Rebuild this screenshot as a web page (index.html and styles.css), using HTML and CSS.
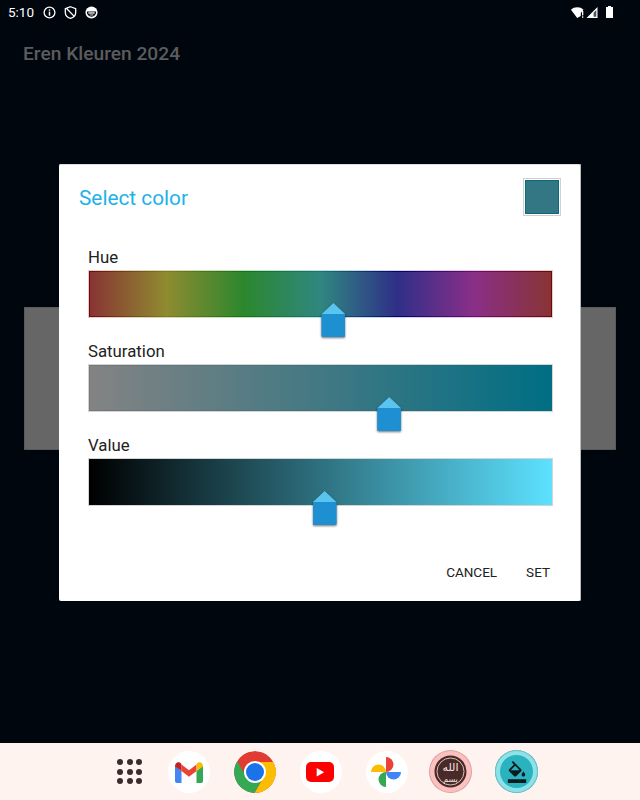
FILE: index.html
```html
<!DOCTYPE html>
<html lang="nl">

<head>
    <meta charset="UTF-8">
    <meta name="viewport" content="width=device-width, initial-scale=1">
    <title>Eren Kleuren 2024</title>
    <link rel="stylesheet" href="styles.css">
</head>

<body>
    <div class="screen">

        <div class="status-bar">
            <div class="status-left">
                <span class="clock">5:10</span>
                <svg class="status-icon" viewBox="0 0 14 14">
                    <circle cx="7" cy="7" r="5.8" fill="none" stroke="#fff" stroke-width="1.4" />
                    <rect x="6.2" y="6" width="1.6" height="4.4" fill="#fff" />
                    <rect x="6.2" y="3.6" width="1.6" height="1.5" fill="#fff" />
                </svg>
                <svg class="status-icon" viewBox="0 0 14 14">
                    <path d="M7 0.8 L12.6 2.8 V6.6 C12.6 9.8 10.400 12.300 7 13.300 C3.600 12.300 1.400 9.800 1.400 6.600 V2.800 Z" fill="none" stroke="#fff" stroke-width="1.4" />
                    <path d="M2.600 2.400 L11 11.200" stroke="#fff" stroke-width="1.4" />
                </svg>
                <svg class="status-icon" viewBox="0 0 14 14">
                    <circle cx="7" cy="7" r="6.500" fill="#fff" />
                    <path d="M2 6 H12 C12 9.500 10 11.500 7 11.500 C4 11.500 2 9.500 2 6 Z" fill="#00060e" />
                    <rect x="3.600" y="6.800" width="6.800" height="1.400" fill="#fff" />
                    <rect x="5" y="9.200" width="4" height="0.900" fill="#fff" />
                </svg>
            </div>
            <div class="status-right">
                <svg class="wifi" viewBox="0 0 14 11">
                    <path d="M0 2.800 C3 -0.500 9.500 -0.500 12.500 2.800 L9.800 6 V9 L6.200 11 Z" fill="#fff" />
                    <rect x="11" y="4" width="1.300" height="4.400" fill="#fff" />
                    <rect x="11" y="9.300" width="1.300" height="1.500" fill="#fff" />
                </svg>
                <svg class="signal" viewBox="0 0 12 11">
                    <path d="M0.500 11 L11.500 0 V11 Z" fill="#fff" />
                    <path d="M7.600 9.800 H10.300 V3 L7.600 5.700 Z" fill="#555" />
                </svg>
                <svg class="battery" viewBox="0 0 7 12">
                    <path d="M2 0 H5 V1 H7 V12 H0 V1 H2 Z" fill="#fff" />
                </svg>
            </div>
        </div>

        <div class="app">
            <h1 class="app-title">Eren Kleuren 2024</h1>
            <div class="backdrop-block"></div>

            <div class="dialog">
                <div class="dialog-head">
                    <h2>Select color</h2>
                    <div class="swatch"></div>
                </div>

                <div class="slider">
                    <div class="slider-label">Hue</div>
                    <div class="track track-hue">
                        <div class="thumb" style="left: 52.8%"></div>
                    </div>
                </div>
                <div class="slider">
                    <div class="slider-label">Saturation</div>
                    <div class="track track-sat">
                        <div class="thumb" style="left: 64.9%"></div>
                    </div>
                </div>
                <div class="slider">
                    <div class="slider-label">Value</div>
                    <div class="track track-val">
                        <div class="thumb" style="left: 50.9%"></div>
                    </div>
                </div>

                <div class="dialog-actions">
                    <span>CANCEL</span>
                    <span>SET</span>
                </div>
            </div>
        </div>

        <div class="dock">
            <div class="all-apps">
                <i></i><i></i><i></i><i></i><i></i><i></i><i></i><i></i><i></i>
            </div>

            <!-- gmail -->
            <div class="dock-icon">
                <svg viewBox="0 0 42 42" width="42" height="42">
                    <path d="M7 15 V30 a2 2 0 0 0 2 2 H13.500 V20 Z" fill="#4285f4" />
                    <path d="M28.500 20 V32 H33 A2 2 0 0 0 35 30 V15 Z" fill="#34a853" />
                    <path d="M13.500 20 L21 25.800 L28.500 20 V13.500 L21 19.200 L13.500 13.500 Z" fill="#ea4335" />
                    <path d="M7 15 C7 11.500 11 10.200 13 12.400 L13.500 13.500 V20 L7 15.500 Z" fill="#c5221f" />
                    <path d="M35 15 C35 11.500 31 10.200 29 12.400 L28.500 13.500 V20 L35 15.500 Z" fill="#fbbc04" />
                </svg>
            </div>

            <!-- chrome -->
            <div class="dock-icon">
                <svg viewBox="0 0 42 42" width="42" height="42">
                    <circle cx="21" cy="21" r="21" fill="#e03c31" />
                    <path d="M21 11 H39.470 A21 21 0 0 1 20.420 42 L29.660 26 Z" fill="#fbbc04" />
                    <path d="M29.660 26 L20.420 42 A21 21 0 0 1 3.100 10 L12.340 26 Z" fill="#34a853" />
                    <circle cx="21" cy="21" r="11" fill="#fff" />
                    <circle cx="21" cy="21" r="9" fill="#1a73e8" />
                </svg>
            </div>

            <!-- youtube -->
            <div class="dock-icon">
                <svg viewBox="0 0 42 42" width="42" height="42">
                    <rect x="6" y="11" width="28" height="20" rx="5" fill="#f00" />
                    <path d="M16.700 17 L24.200 21.200 L16.700 25.400 Z" fill="#fff" />
                </svg>
            </div>

            <!-- photos -->
            <div class="dock-icon">
                <svg viewBox="0 0 42 42" width="42" height="42">
                    <path d="M20 21 V6 A7.500 7.500 0 0 1 20 21 Z" fill="#ea4335" />
                    <path d="M20 21 H35 A7.500 7.500 0 0 1 20 21 Z" fill="#4285f4" />
                    <path d="M20 21 V36 A7.500 7.500 0 0 1 20 21 Z" fill="#34a853" />
                    <path d="M20 21 H5 A7.500 7.500 0 0 1 20 21 Z" fill="#fbbc04" />
                </svg>
            </div>

            <div class="dock-adaptive">
                <div class="round-app app-bismillah">
                    <svg viewBox="0 0 43 43" width="43" height="43">
                        <circle cx="21.500" cy="21.500" r="16" fill="#4a2a28" />
                        <circle cx="21.500" cy="21.500" r="13.500" fill="none" stroke="#f3e6e0" stroke-width="0.800" />
                        <text x="21.500" y="21" class="callig-top">الله</text>
                        <text x="21.500" y="32" class="callig-bottom">بسم</text>
                    </svg>
                </div>
                <div class="round-app app-fill">
                    <svg viewBox="0 0 24 24" width="22" height="22">
                        <path d="M16.560 8.940L7.620 0 6.210 1.410l2.380 2.380-5.150 5.150c-.59.590-.59 1.540 0 2.120l5.500 5.500c.29.290.68.440 1.060.440s.77-.15 1.060-.44l5.500-5.500c.59-.58.59-1.530 0-2.120zM5.210 10L10 5.210 14.790 10H5.210zM19 11.500s-2 2.170-2 3.500c0 1.100.9 2 2 2s2-.9 2-2c0-1.330-2-3.500-2-3.500zM2 20h20v4H2v-4z" fill="#0c1a1e" />
                    </svg>
                </div>
            </div>
        </div>

    </div>
</body>

</html>
```

FILE: styles.css
```css
* {
    box-sizing: border-box;
}

body {
    margin: 0;
    font-family: Roboto, 'Liberation Sans', sans-serif;
    background: #00060e;
}

.screen {
    width: 640px;
    height: 800px;
    display: flex;
    flex-direction: column;
    overflow: hidden;
    background: #00060e;
}

/* status bar */
.status-bar {
    height: 24px;
    padding: 0 27px 0 8px;
    display: flex;
    justify-content: space-between;
    align-items: center;
    color: white;
}

.status-left {
    display: flex;
    align-items: center;
    gap: 8px;
}

.clock {
    width: 27px;
    font-size: 13.500px;
}

.status-icon {
    width: 13px;
    height: 13px;
}

.status-right {
    display: flex;
    align-items: center;
    gap: 1px;
}

.wifi {
    width: 14px;
    height: 11px;
}

.signal {
    width: 12px;
    height: 11px;
}

.battery {
    width: 7px;
    height: 12px;
    margin-left: 7px;
}

/* app behind the dialog */
.app {
    flex: 1;
    position: relative;
    padding: 0 24px;
}

.app-title {
    margin: 18px 0 0 -1px;
    height: 24px;
    line-height: 24px;
    font-size: 19.200px;
    font-weight: 500;
    color: #5c5c5c;
}

.backdrop-block {
    margin-top: 241px;
    height: 143px;
    background: #666;
    border: 1px solid #5a5a5a;
}

/* dialog */
.dialog {
    position: absolute;
    left: 59px;
    top: 140px;
    width: 522px;
    height: 437px;
    padding: 14px 20px 0 20px;
    background: white;
    border-radius: 2px;
    box-shadow: inset -1px 0 0 #bbb, inset 0 1px 0 #ddd;
}

.dialog-head {
    display: flex;
    justify-content: space-between;
    align-items: center;
    margin-bottom: 31px;
}

.dialog-head h2 {
    margin: 2px 0 0;
    font-size: 20.800px;
    font-weight: 400;
    color: #22b2e8;
}

.swatch {
    width: 38px;
    height: 38px;
    background: #337785;
    border: 1px solid #d0d0d0;
    box-shadow: inset 0 0 0 1px white, inset 0 0 0 2px #0b6a7c;
}

.slider {
    margin: 0 9px 0 10px;
    height: 94px;
}

.slider-label {
    height: 24px;
    line-height: 20px;
    font-size: 16.800px;
    color: #222;
    margin-left: -1px;
}

.track {
    position: relative;
    height: 46px;
    border: 1px solid transparent;
    box-shadow: 0 0 0 1px #d4d4d4;
}

.track-hue {
    background:
        linear-gradient(to right, #883434, #8f8b30 16.6%, #2c872e 33.3%, #2f8780 50%, #2f2f88 66.6%, #8a2f88 83.3%, #883434) padding-box,
        linear-gradient(to right, #800000, #808000 16.6%, #008000 33.3%, #008080 50%, #000080 66.6%, #800080 83.3%, #800000) border-box;
}

.track-sat {
    background:
        linear-gradient(to right, #838383, #006e84) padding-box,
        linear-gradient(to right, #777, #006e84) border-box;
}

.track-val {
    background:
        linear-gradient(to right, #000, #5ce1ff) padding-box,
        linear-gradient(to right, #000, #5ce1ff) border-box;
}

.thumb {
    position: absolute;
    top: 31px;
    width: 24px;
    height: 34px;
    margin-left: -12px;
    filter: drop-shadow(0 1.500px 1px rgba(0, 0, 0, 0.55));
}

.thumb::before {
    content: "";
    display: block;
    width: 100%;
    height: 100%;
    background: linear-gradient(#5ac4f0 11px, #1e90d2 11px);
    clip-path: polygon(50% 0, 100% 33%, 100% 97%, 97% 100%, 3% 100%, 0 97%, 0 33%);
}

.dialog-actions {
    display: flex;
    justify-content: flex-end;
    gap: 29px;
    margin-top: 35px;
    padding-right: 11px;
    font-size: 13.500px;
    color: #222;
}

/* dock */
.dock {
    height: 57px;
    padding-left: 117px;
    display: flex;
    align-items: center;
    gap: 24px;
    background: #fff3f0;
}

.all-apps {
    width: 25px;
    height: 25px;
    margin-right: 2px;
    display: grid;
    grid-template-columns: repeat(3, 6px);
    grid-auto-rows: 6px;
    justify-content: space-between;
    align-content: space-between;
}

.all-apps i {
    border-radius: 50%;
    background: #3d2b2b;
}

.dock-icon {
    width: 42px;
    height: 42px;
    border-radius: 50%;
    background: white;
    overflow: hidden;
}

.dock-adaptive {
    display: flex;
    gap: 23px;
    margin-left: -3px;
}

.round-app {
    width: 43px;
    height: 43px;
    border-radius: 50%;
    display: flex;
    align-items: center;
    justify-content: center;
}

.app-bismillah {
    background: #fcc0be;
    box-shadow: inset 0 0 0 1px rgba(0, 0, 0, 0.15);
}

.callig-top,
.callig-bottom {
    fill: #f3e6e0;
    text-anchor: middle;
    font-family: 'DejaVu Sans', sans-serif;
}

.callig-top {
    font-size: 11px;
}

.callig-bottom {
    font-size: 8px;
}

.app-fill {
    background: #2ab2bf;
    box-shadow: inset 0 0 0 1px rgba(0, 0, 0, 0.15), inset 0 0 0 5px #8be2e8;
}
```
